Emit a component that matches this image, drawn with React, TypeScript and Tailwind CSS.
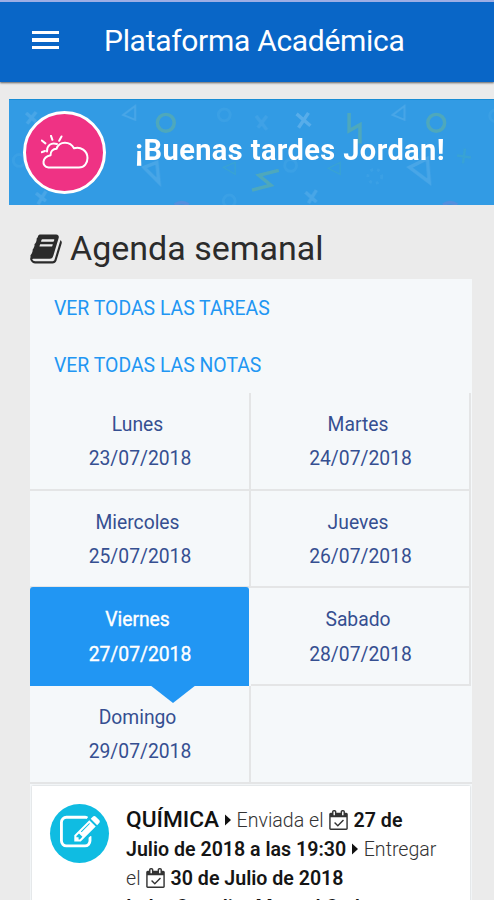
import type { ReactNode } from "react";

const days = [
    { name: "Lunes", date: "23/07/2018" },
    { name: "Martes", date: "24/07/2018" },
    { name: "Miercoles", date: "25/07/2018" },
    { name: "Jueves", date: "26/07/2018" },
    { name: "Viernes", date: "27/07/2018", active: true },
    { name: "Sabado", date: "28/07/2018" },
    { name: "Domingo", date: "29/07/2018" },
];

interface IconProps {
    className?: string;
}

function BookIcon({ className }: IconProps) {
    return (
        <svg viewBox="0 0 1792 1792" fill="currentColor" className={className}>
            <path d="M1703 478q40 57 18 129l-275 906q-19 64-76.5 107.5t-122.5 43.5h-923q-77 0-148.5-53.5t-99.5-131.5q-24-67-2-127 0-4 3-27t4-37q1-8-3-21.5t-3-19.5q2-11 8-21t16.5-23.5 16.5-23.5q23-38 45-91.5t30-91.5q3-10 .5-30t-.5-28q3-11 17-28t17-23q21-36 42-92t25-90q1-9-2.5-32t.5-28q4-13 22-30.5t22-22.5q19-26 42.5-84.5t27.5-96.5q1-8-3-25.5t-2-26.5q2-8 9-18t18-23 17-21q8-12 16.5-30.5t15-35 16-36 19.5-32 26.5-23.5 36-11.5 47.5 5.5l-1 3q38-9 51-9h761q74 0 114 56t18 130l-274 906q-36 119-71.5 153.5t-128.5 34.5h-869q-27 0-38 15-11 16-1 43 24 70 144 70h923q29 0 56-15.5t35-41.5l300-987q7-22 5-57 38 15 59 43zm-1064 2q-4 13 2 22.5t20 9.5h608q13 0 25.5-9.5t16.5-22.5l21-64q4-13-2-22.5t-20-9.5h-608q-13 0-25.5 9.5t-16.5 22.5zm-83 256q-4 13 2 22.5t20 9.5h608q13 0 25.5-9.5t16.5-22.5l21-64q4-13-2-22.5t-20-9.5h-608q-13 0-25.5 9.5t-16.5 22.5z" />
        </svg>
    );
}

function EditIcon({ className }: IconProps) {
    return (
        <svg viewBox="0 0 1792 1792" fill="currentColor" className={className}>
            <path d="M888 1184l116-116-152-152-116 116v56h96v96h56zm440-720q-16-16-33 1l-350 350q-17 17-1 33t33-1l350-350q17-17 1-33zm80 594v190q0 119-84.5 203.5t-203.5 84.5h-832q-119 0-203.5-84.5t-84.5-203.5v-832q0-119 84.5-203.5t203.5-84.5h832q63 0 117 25 15 7 18 23 3 17-9 29l-49 49q-14 14-32 8-23-6-45-6h-832q-66 0-113 47t-47 113v832q0 66 47 113t113 47h832q66 0 113-47t47-113v-126q0-13 9-22l64-64q15-15 35-7t20 29zm-96-738l288 288-672 672h-288v-288zm444 132l-92 92-288-288 92-92q28-28 68-28t68 28l152 152q28 28 28 68t-28 68z" />
        </svg>
    );
}

function CalendarIcon() {
    return (
        <svg
            viewBox="0 0 1664 1792"
            fill="currentColor"
            className="mr-[1px] ml-[0.5px] inline-block h-[20px] w-[19px] align-[-3px] text-[#333]"
        >
            <path d="M1303 964l-512 512q-10 9-23 9t-23-9l-288-288q-9-10-9-23t9-22l46-46q9-9 22-9t23 9l220 220 444-444q10-9 23-9t22 9l46 46q9 9 9 22t-9 23zM128 1664h1408v-1024h-1408v1024zM512 448v-288q0-14-9-23t-23-9h-64q-14 0-23 9t-9 23v288q0 14 9 23t23 9h64q14 0 23-9t9-23zM1280 448v-288q0-14-9-23t-23-9h-64q-14 0-23 9t-9 23v288q0 14 9 23t23 9h64q14 0 23-9t9-23zM1664 384v1280q0 52-38 90t-90 38h-1408q-52 0-90-38t-38-90v-1280q0-52 38-90t90-38h128v-96q0-66 47-113t113-47h64q66 0 113 47t47 113v96h384v-96q0-66 47-113t113-47h64q66 0 113 47t47 113v96h128q52 0 90 38t38 90z" />
        </svg>
    );
}

function Caret() {
    return (
        <svg viewBox="0 0 6 12" className="mr-[1px] ml-[1px] inline-block h-[12px] w-[6px] align-[1px]">
            <path d="M0 0.5L6 6L0 11.5Z" fill="#111" />
        </svg>
    );
}

function WeatherIcon() {
    return (
        <svg
            viewBox="0 0 48 36"
            fill="none"
            stroke="white"
            strokeWidth="2"
            strokeLinecap="round"
            strokeLinejoin="round"
            className="h-[36px] w-[48px]"
        >
            <path d="M7.5 32.5H38C43.5 32.5 46.5 28 46.5 23C46.5 16 39.5 11 33 13.3C29 6 18.5 5.8 15.5 13.8C11.8 13.8 9.3 16.6 9.6 20.2C1 22 0 31.5 7.5 32.5Z" />
            <path d="M6 16.5C5.8 10.5 10 7 16 9" />
            <path d="M10 .8L11.4 4.8M20.5 1.5L18.2 5.8M.8 5.5L4.4 8.4M.6 17.2L4 16" />
        </svg>
    );
}

// Faint confetti shapes printed on the greeting banner
function BannerPattern() {
    return (
        <svg
            viewBox="0 0 485 106"
            fill="none"
            strokeWidth="3.5"
            className="absolute inset-0 h-full w-full"
        >
            <g stroke="#8fc9f2" opacity="0.25">
                <path d="M15 13L25 22M25 12L16 24M25 94L35 102M35 92L27 105" />
                <path d="M247 16L258 30M258 16L249 28" opacity="0.6" />
                <path d="M297 93L308 103M308 91L300 104" />
                <path d="M113 15L125 6V20Z M385 15L397 6V20Z" strokeWidth="2" />
                <path d="M134 68L147 63L149 83Z M402 68L420 59L422 83Z" />
            </g>
            <path d="M288 14L302 26M300 13L290 28" stroke="#8fc9f2" opacity="0.4" />
            <g stroke="#79c0ef" opacity="0.12" strokeWidth="3">
                <circle cx="215" cy="15" r="6" />
                <circle cx="8" cy="61" r="6" />
                <circle cx="282" cy="66" r="6" />
                <circle cx="220" cy="102" r="6" />
                <circle cx="367" cy="77" r="7" strokeDasharray="3 4" />
                <circle cx="489" cy="16" r="6" />
            </g>
            <g stroke="#72b98c" opacity="0.45">
                <circle cx="156" cy="23" r="8.5" />
                <circle cx="429" cy="23" r="8.5" />
                <path d="M341 13V31L352 25V44" />
                <path d="M270 71L250 76L262 86L243 91" />
            </g>
            <g stroke="#3fa9c5" opacity="0.5" strokeWidth="2.5">
                <path d="M450 56L464 58M458 49L456 64" />
                <path d="M320 69L332 63V75Z M214 68L226 63V75Z" strokeWidth="1.5" />
            </g>
            <path d="M165 106q7-5 14 0M436 106q7-5 14 0" stroke="#7583d5" opacity="0.5" />
        </svg>
    );
}

function Header() {
    return (
        <header className="relative z-10 flex h-[82px] items-center border-t-2 border-[#9daee5] bg-[#0966c7] pl-[32px] shadow-[0_1px_2px_rgba(0,0,0,0.6)]">
            <button className="mb-[4px] flex w-[27px] flex-col gap-[4px]">
                <span className="h-[3.5px] w-full bg-white" />
                <span className="h-[3.5px] w-full bg-white" />
                <span className="h-[3.5px] w-full bg-white" />
            </button>
            <h1 className="mb-[4px] ml-[45px] text-[30px] tracking-[-0.3px] whitespace-nowrap text-white">
                Plataforma Académica
            </h1>
        </header>
    );
}

function Greeting() {
    return (
        <section className="relative mt-[17px] ml-[9px] flex h-[106px] items-center overflow-hidden border-t border-[#198dd5] bg-[#329be4]">
            <BannerPattern />
            <div className="relative ml-[14px] flex size-[83px] shrink-0 items-center justify-center rounded-full border-3 border-white bg-[#ef3284]">
                <WeatherIcon />
            </div>
            <p className="relative mb-[4px] ml-[29px] text-[29px] font-bold tracking-[0.4px] whitespace-nowrap text-white">
                ¡Buenas tardes Jordan!
            </p>
        </section>
    );
}

function DayCell({ name, date, active }: { name: string; date: string; active?: boolean }) {
    if (active) {
        return (
            <div className="relative mt-[-1px] mr-[2px] flex h-[98.5px] flex-col items-center justify-center rounded-t-[3px] bg-[#2196f3] pt-[2px] pr-[4px] text-white [-webkit-text-stroke:0.35px_white]">
                <span>{name}</span>
                <span className="pl-[5px]">{date}</span>
                <svg viewBox="0 0 46 18" className="absolute top-[98px] left-[120px] h-[18px] w-[46px]">
                    <path d="M0 0H46L23 18Z" fill="#2196f3" />
                </svg>
            </div>
        );
    }
    return (
        <div className="flex h-[97.7px] flex-col items-center justify-center border-r-2 border-b-2 border-[#e4e5e6] pt-[3px] pr-[4px]">
            <span>{name}</span>
            <span className="pl-[5px]">{date}</span>
        </div>
    );
}

function Strong({ children }: { children: ReactNode }) {
    return <b className="font-semibold text-[#151515]">{children}</b>;
}

function TaskCard() {
    return (
        <article className="mx-[2px] mt-[2px] flex h-[160px] bg-white pt-[18px] pl-[18px] shadow-[0_0_2px_rgba(0,0,0,0.2)]">
            <div className="flex size-[59px] shrink-0 items-center justify-center rounded-full bg-[#0fbce2]">
                <EditIcon className="h-[40px] w-[40px] text-white" />
            </div>
            <div className="mt-[1px] ml-[17px] text-[19.6px] leading-[29px] font-light whitespace-nowrap text-[#333]">
                <p>
                    <b className="text-[22.7px] font-medium text-[#111]">QUÍMICA</b> <Caret /> Enviada el{" "}
                    <CalendarIcon /> <Strong>27 de</Strong>
                </p>
                <p>
                    <Strong>Julio de 2018 a las 19:30</Strong> <Caret /> Entregar
                </p>
                <p>
                    el <CalendarIcon /> <Strong>30 de Julio de 2018</Strong>
                </p>
                <p>
                    <Strong>Indra Cattaliot Manuel Cadena</Strong>
                </p>
            </div>
        </article>
    );
}

function App() {
    return (
        <div className="h-[900px] w-[494px] overflow-hidden bg-[#ebebeb] font-['Roboto',sans-serif]">
            <Header />
            <Greeting />

            <main className="ml-[30px] w-[442px]">
                <h2 className="flex h-[74px] items-center pt-[13px] text-[34px] text-[#2b2b2b]">
                    <BookIcon className="mr-[7px] ml-[-1px] h-[34px] w-[34px]" />
                    Agenda semanal
                </h2>

                <div className="bg-[#f5f8fa]">
                    {/* Links */}
                    <nav className="flex h-[114px] flex-col pt-[1px] text-[19.4px] text-[#2196f3]">
                        <a className="flex h-[57px] shrink-0 items-center pl-[24px]">VER TODAS LAS TAREAS</a>
                        <a className="flex h-[57px] shrink-0 items-center pl-[24px]">VER TODAS LAS NOTAS</a>
                    </nav>

                    {/* Week */}
                    <div className="grid grid-cols-[221px_220px] text-[19.3px] leading-[34.5px] text-[#354f91]">
                        {days.map((day) => (
                            <DayCell key={day.date} {...day} />
                        ))}
                        <div className="mr-[-1px] border-b-2 border-[#e4e5e6]" />
                    </div>

                    <TaskCard />
                </div>
            </main>
        </div>
    );
}

export default App;
